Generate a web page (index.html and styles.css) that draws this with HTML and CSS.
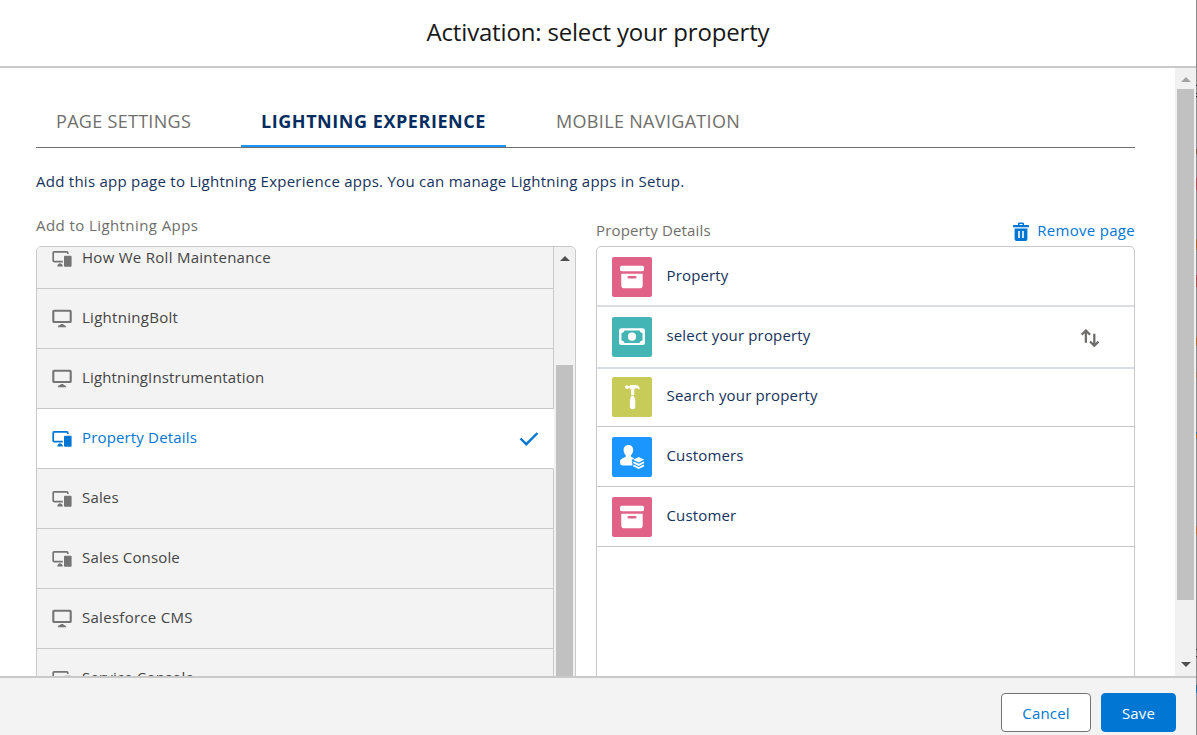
FILE: index.html
```html
<!DOCTYPE html>
<html lang="en">
<head>
<meta charset="utf-8">
<title>Activation: select your property</title>
<link rel="stylesheet" href="styles.css">
</head>
<body>
<svg width="0" height="0" class="defs">
  <symbol id="multi" viewBox="0 0 20 20">
    <path d="M15.800 4.900V3.800q0-.9-.9-.9H2.100q-.9 0-.9.9v8q0 .9.900.9h8.700" fill="none" stroke="currentColor" stroke-width="1.700"/>
    <path d="M8 14.200q1.100.1 1.400.9 1 .3 1.300 1.400v1H5.300q.1-1.900 1.300-2.400.3-.8 1.400-.9z"/><rect x="12" y="6.800" width="7.600" height="10.900" rx="1"/>
  </symbol>
  <symbol id="desk" viewBox="0 0 20 20">
    <rect x="1.300" y="1.700" width="17.400" height="11.300" rx=".8" fill="none" stroke="currentColor" stroke-width="2.100"/>
    <path d="M10 14.900q1.700.1 2 1.200 2 .4 2.300 2.200H5.700q.3-1.800 2.300-2.200.3-1.100 2-1.200z"/>
  </symbol>
  <symbol id="archive" viewBox="0 0 40 40">
    <rect x="8" y="8.700" width="24" height="5.600" rx="1.800"/>
    <path fill-rule="evenodd" d="M9.200 16.700h21.500v11.800a2.700 2.700 0 0 1-2.700 2.700H12a2.700 2.700 0 0 1-2.700-2.700zM16.700 19a1.300 1.300 0 0 0 0 2.600h6.600a1.300 1.300 0 0 0 0-2.600z"/>
  </symbol>
</svg>
<div class="modal">
  <header class="header"><h1 class="title">Activation: select your property</h1></header>
  <main class="body">
    <div class="content">
      <nav class="tabs">
        <div class="tab tab-page"><span>PAGE SETTINGS</span></div>
        <div class="tab tab-active"><span>LIGHTNING EXPERIENCE</span></div>
        <div class="tab tab-mobile"><span>MOBILE NAVIGATION</span></div>
      </nav>
      <p class="intro"><span>Add this app page to Lightning Experience apps. You can manage Lightning apps in Setup.</span></p>
      <div class="columns">
        <section class="col">
          <div class="label label-left">Add to Lightning Apps</div>
          <div class="apps">
            <ul class="app-list">
              <li class="app app-first"><svg class="app-icon"><use href="#multi"/></svg><span class="wide">How We Roll Maintenance</span></li>
              <li class="app"><svg class="app-icon"><use href="#desk"/></svg><span class="wide">LightningBolt</span></li>
              <li class="app"><svg class="app-icon"><use href="#desk"/></svg><span>LightningInstrumentation</span></li>
              <li class="app selected"><svg class="app-icon"><use href="#multi"/></svg><span>Property Details</span>
                <svg class="check" viewBox="0 0 20 16"><path d="M1.500 7.500 7.300 13.200 18.500 2" fill="none" stroke="currentColor" stroke-width="2.400"/></svg></li>
              <li class="app"><svg class="app-icon"><use href="#multi"/></svg><span>Sales</span></li>
              <li class="app"><svg class="app-icon"><use href="#multi"/></svg><span>Sales Console</span></li>
              <li class="app"><svg class="app-icon"><use href="#desk"/></svg><span class="wide">Salesforce CMS</span></li>
              <li class="app"><svg class="app-icon"><use href="#multi"/></svg><span>Service Console</span></li>
            </ul>
            <div class="list-scroll">
              <svg class="arrow" viewBox="0 0 10 5"><path d="M0 5 5 0l5 5z"/></svg>
              <div class="thumb"></div>
            </div>
          </div>
        </section>
        <section class="col">
          <div class="label label-right"><span>Property Details</span>
            <a class="remove"><svg class="trash" viewBox="0 0 16 19"><path d="M5 3V1.800A1.300 1.300 0 0 1 6.300.5h3.400A1.300 1.300 0 0 1 11 1.800V3h4.200q.8 0 .8.800v1.400H0V3.800Q0 3 .8 3zM6.500 3h3V1.900h-3zM1.600 6.500h12.800v10.400a2 2 0 0 1-2 2H3.600a2 2 0 0 1-2-2zM5.200 9v7h1.600V9zm4 0v7h1.600V9z" fill-rule="evenodd"/></svg><span>Remove page</span></a></div>
          <ul class="pages">
            <li class="page"><svg class="tile pink" viewBox="0 0 40 40"><use href="#archive"/></svg><span>Property</span></li>
            <li class="page current"><svg class="tile teal" viewBox="0 0 40 40"><rect x="7" y="11.300" width="26" height="16.800" rx="2.300"/><path class="hole" d="M12.500 13.500h15q.3 2.300 3 2.600v7.300q-2.700.3-3 2.600h-15q-.3-2.300-3-2.600v-7.300q2.700-.3 3-2.600z"/><circle cx="20" cy="19.700" r="4.100"/></svg><span>select your property</span>
              <svg class="sort" viewBox="0 0 18 18"><path d="M4.900 13.700V1.700M.7 5.700 4.900 1.500l4.200 4.200M13.300 4.800v11.700M9 12.500l4.300 4.200 4.200-4.200" fill="none" stroke="currentColor" stroke-width="2.300"/></svg></li>
            <li class="page search"><svg class="tile olive" viewBox="0 0 40 40"><path d="M12.800 9.200 14.500 8.200 16.200 9h1.200l1.300-1h5.500q3 .6 3.900 4.500-2.200-1.500-5-1.200l-.8 1.200v5.500h-3.300v-5.500l-1.300-1.300h-.8l-1.700.9-1.700-.5z"/><path d="M19.700 18.500h1.700q1.900 2.500 1.900 5v6q0 2.700-2.700 2.700t-2.700-2.700v-6q0-2.500 1.800-5z"/></svg><span>Search your property</span></li>
            <li class="page"><svg class="tile blue" viewBox="0 0 40 40"><path d="M16.500 8c3.100 0 4.700 2.200 4.700 5.100 0 2-.9 3.700-2 4.900-.8 1-.3 1.800.7 2.300l2.300 1-2 1.300q-1.200 1 .4 2l-.9 1.100 1.100 1.200q-1.400.9-.1 1.500H10.500Q8 28.400 8 26v-1.500c0-2.500 3.300-3.200 5-4.200 1-.5 1.200-1.400.5-2.300-1.100-1.200-1.900-2.900-1.900-4.900C11.600 10.200 13.200 8 16.500 8z"/><path d="m26.700 20.100 5.600 2.600-5.600 2.700-5.600-2.700z"/><path class="layers" d="m21.400 25.300 5.300 2.600 5.300-2.600M21.400 28.400l5.300 2.600 5.300-2.600"/></svg><span>Customers</span></li>
            <li class="page"><svg class="tile pink" viewBox="0 0 40 40"><use href="#archive"/></svg><span>Customer</span></li>
          </ul>
        </section>
      </div>
    </div>
    <div class="main-scroll">
      <svg class="arrow arrow-off" viewBox="0 0 10 5"><path d="M0 5 5 0l5 5z"/></svg>
      <div class="thumb"></div>
      <svg class="arrow arrow-down" viewBox="0 0 10 5"><path d="M0 0h10L5 5z"/></svg>
    </div>
  </main>
  <footer class="footer"><button class="btn">Cancel</button><button class="btn primary">Save</button></footer>
</div>
<div class="edge"></div>
</body>
</html>
```
FILE: styles.css
```css
* { box-sizing: border-box; }
body { margin: 0; width: 1197px; height: 735px; overflow: hidden; display: flex; background: #fff; font: 15px/20px "Open Sans", "Noto Sans", sans-serif; color: #16325c; }
ul { list-style: none; margin: 0; padding: 0; }
span { white-space: nowrap; }
svg { fill: currentColor; flex: none; }
.defs { position: absolute; }
.modal { width: 1196px; height: 735px; display: flex; flex-direction: column; }
.edge { width: 1px; background: linear-gradient(#8c8c8c 85px, #223 85px 86px, #8c8c8c 86px 93px, #223 93px 94px, #8c8c8c 94px 96px, #223 96px 97px, #8c8c8c 97px 149px, #865a30 149px 154px, #8c8c8c 154px 178px, #9b5548 178px 190px, #8c8c8c 190px 239px, #9b6b30 239px 250px, #8c8c8c 250px 275px, #9b5548 275px 287px, #8c8c8c 287px 338px, #9b6b30 338px 346px, #8c8c8c 346px 372px, #9b7b58 372px 378px, #8c8c8c 378px 432px, #26709c 432px 434px, #9b6b30 434px 439px, #8c8c8c 439px 526px, #a8743c 526px 534px, #8c8c8c 534px 649px, #333 649px 650px, #8c8c8c 650px 656px, #333 656px 657px, #8c8c8c 657px 685px, #26709c 685px 693px, #8c8c8c 693px); }
.header { height: 68px; flex: none; border-bottom: 2px solid #c9c9c9; text-align: center; }
.title { margin: 0; padding-top: 16px; font-size: 24px; line-height: 32px; font-weight: 400; color: #181818; letter-spacing: -.17px; }
.body { flex: 1; min-height: 0; display: flex; overflow: hidden; }
.content { width: 1175px; padding: 28px 40px 0 36px; height: 608px; overflow: hidden; }
.tabs { display: flex; height: 52px; border-bottom: 1px solid #706e6b; font-size: 18px; line-height: 51px; color: #706e6b; }
.tab { padding: 0 20px; letter-spacing: .3px; height: 51px; }
.tab-page { width: 205px; }
.tab-active { width: 265px; border-bottom: 2px solid #1b96ff; color: #032d60; font-weight: 700; letter-spacing: .55px; }
.tab-mobile { padding-left: 50px; letter-spacing: .33px; }
.intro { margin: 23px 0 0; letter-spacing: .26px; }
.columns { display: flex; gap: 20px; margin-top: 24px; }
.col { flex: none; width: 540px; }
.col + .col { width: 539px; }
.label { height: 31px; color: #706e6b; }
.label-left { letter-spacing: .42px; }
.label-right { display: flex; justify-content: space-between; padding-top: 5px; letter-spacing: .15px; }
.remove { color: #0176d3; display: flex; gap: 8px; letter-spacing: .3px; }
.trash { width: 16px; height: 19px; margin-top: 2px; }
.apps { height: 470px; border: 1px solid #c9c9c9; border-radius: 5px; overflow: hidden; display: flex; }
.app-list { width: 517px; letter-spacing: .16px; }
.wide { letter-spacing: .28px; }
.app { height: 60px; padding: 0 15px; display: flex; align-items: center; border: solid #c9c9c9; border-width: 0 1px 1px 0; background: #f3f3f3; color: #444; }
.app span { margin-top: -3px; margin-left: 10px; }
.app-icon { width: 20px; height: 20px; color: #747474; margin-top: 1px; }
.app-first { height: 42px; padding-bottom: 18px; }
.app-first span { margin-top: -4px; }
.selected { background: #fff; color: #0176d3; border-right-color: #fff; }
.selected .app-icon { color: #0176d3; }
.check { width: 20px; height: 16px; margin: 1px -1px 0 auto; }
.list-scroll { width: 21px; background: #f1f1f1; display: flex; flex-direction: column; align-items: center; padding: 9px 0 0; }
.arrow { width: 10px; height: 5px; color: #505050; }
.list-scroll .thumb { width: 17px; flex: 1; margin-top: 104px; margin-right: 1px; background: #c1c1c1; }
.pages { height: 470px; border: 1px solid #c9c9c9; border-radius: 5px; letter-spacing: .15px; }
.page { height: 60px; padding: 0 15px; display: flex; align-items: center; border-bottom: 1px solid #c9c9c9; }
.page > span { margin: -4px 0 0 14.500px; }
.page:first-child { padding-top: 1px; border-bottom: 2px solid #d8dde6; }
.current { height: 62px; padding-bottom: 0; border-bottom: 2px solid #d8dde6; }
.search { height: 58px; padding-bottom: 1px; }
.tile { width: 40px; height: 40px; border-radius: 2px; color: #fff; }
.pink { background: #e06287; }
.teal { background: #44b5b5; }
.olive { background: #c7cb57; }
.blue { background: #1b96ff; }
.hole { fill: #44b5b5; }
.layers { fill: none; stroke: #fff; stroke-width: 1.8; }
.sort { width: 18px; height: 18px; margin: 1px 20px 0 auto; color: #706e6b; }
.main-scroll { width: 21px; background: #f1f1f1; display: flex; flex-direction: column; align-items: center; padding: 9px 0 9px; }
.main-scroll .thumb { width: 17px; height: 511px; margin-right: 1px; margin-top: 7px; background: #c1c1c1; }
.arrow-off { color: #a3a3a3; }
.arrow-down { margin-top: auto; }
.footer { height: 59px; flex: none; display: flex; justify-content: flex-end; gap: 10px; padding: 15px 20px 0 0; background: #f3f3f3; border-top: 2px solid #c9c9c9; }
.btn { width: 90px; height: 39px; border: 1px solid #747474; border-radius: 4px; background: #fff; color: #0176d3; font: inherit; letter-spacing: .15px; padding: 0; }
.primary { width: 75px; border-color: #0176d3; background: #0176d3; color: #fff; }
```
